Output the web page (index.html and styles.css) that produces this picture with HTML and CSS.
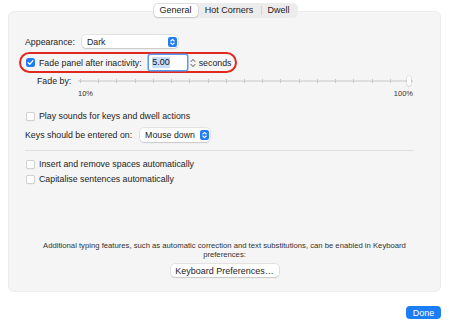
FILE: index.html
```html
<!DOCTYPE html>
<html>
<head>
<meta charset="utf-8">
<link rel="stylesheet" href="styles.css">
</head>
<body>
<div class="window">
  <div class="tabs">
    <div class="seg">
      <span class="tab t-general sel">General</span>
      <span class="tab t-hot">Hot Corners</span>
      <span class="tab t-dwell">Dwell</span>
    </div>
  </div>
  <div class="panel">
    <div class="row r-appearance">
      <span class="label">Appearance:</span>
      <span class="popup w-dark">
        <span class="ptext">Dark</span>
        <svg class="pbtn" width="9" height="10" viewBox="0 0 9 10"><rect x="0" y="0" width="9" height="10" rx="2.2" fill="#1f7cf2"/><path d="M2.8 4 L4.5 2.3 L6.2 4 M2.8 6 L4.5 7.7 L6.2 6" fill="none" stroke="#fff" stroke-width="1.1" stroke-linecap="round" stroke-linejoin="round"/></svg>
      </span>
    </div>
    <div class="highlight">
      <span class="cb on"><svg width="9" height="9" viewBox="0 0 9 9"><path d="M2.2 4.7 L3.8 6.3 L6.9 2.6" fill="none" stroke="#fff" stroke-width="1.3" stroke-linecap="round" stroke-linejoin="round"/></svg></span>
      <span class="label">Fade panel after inactivity:</span>
      <span class="field"><span class="sel-text">5.00</span></span>
      <svg class="stepper" width="6" height="12" viewBox="0 0 6 12"><path d="M1 4.6 L3 2.4 L5 4.6 M1 7.4 L3 9.6 L5 7.4" fill="none" stroke="#555" stroke-width="1" stroke-linecap="round" stroke-linejoin="round"/></svg>
      <span class="label">seconds</span>
    </div>
    <div class="slider-row">
      <span class="label fadeby">Fade by:</span>
      <div class="slider">
        <div class="track">
          <i></i><i></i><i></i><i></i><i></i><i></i><i></i><i></i><i></i><i></i><i></i><i></i><i></i><i></i><i></i><i></i><i></i><i></i><i></i>
          <span class="thumb"></span>
        </div>
      </div>
    </div>
    <div class="scale">
      <span>10%</span>
      <span>100%</span>
    </div>
    <div class="row check-row r-sounds">
      <span class="cb"></span>
      <span class="label">Play sounds for keys and dwell actions</span>
    </div>
    <div class="row r-keys">
      <span class="label">Keys should be entered on:</span>
      <span class="popup w-mouse">
        <span class="ptext">Mouse down</span>
        <svg class="pbtn" width="9" height="10" viewBox="0 0 9 10"><rect x="0" y="0" width="9" height="10" rx="2.2" fill="#1f7cf2"/><path d="M2.8 4 L4.5 2.3 L6.2 4 M2.8 6 L4.5 7.7 L6.2 6" fill="none" stroke="#fff" stroke-width="1.1" stroke-linecap="round" stroke-linejoin="round"/></svg>
      </span>
    </div>
    <div class="sep"></div>
    <div class="row check-row r-insert">
      <span class="cb"></span>
      <span class="label">Insert and remove spaces automatically</span>
    </div>
    <div class="row check-row r-cap">
      <span class="cb"></span>
      <span class="label">Capitalise sentences automatically</span>
    </div>
    <p class="note">Additional typing features, such as automatic correction and text substitutions, can be enabled in Keyboard preferences:</p>
    <div class="btn-row">
      <button class="btn">Keyboard Preferences…</button>
    </div>
  </div>
  <div class="footer">
    <button class="done">Done</button>
  </div>
</div>
</body>
</html>
```

FILE: styles.css
```css
* {
  box-sizing: border-box;
  margin: 0;
  padding: 0;
}

html,
body {
  width: 450px;
  height: 326px;
  background: #ffffff;
  overflow: hidden;
}

body {
  font-family: "Liberation Sans", Arial, sans-serif;
  font-size: 8.8px;
  color: #232323;
}

.window {
  display: flex;
  flex-direction: column;
  height: 326px;
  padding: 3px 9px 0 8px;
}

/* segmented control */
.tabs {
  display: flex;
  justify-content: center;
  margin-bottom: -7px;
  position: relative;
  z-index: 1;
}

.seg {
  display: flex;
  align-items: center;
  height: 15px;
  padding: 1px;
  background: #ececec;
  border-radius: 5px;
  margin-left: 1px;
}

.tab {
  height: 13px;
  line-height: 13px;
  text-align: center;
  color: #222;
  font-size: 9px;
}

.t-general { width: 44px; }
.t-hot { width: 63px; }
.t-dwell {
  width: 36px;
  position: relative;
}

.t-dwell::before {
  content: "";
  position: absolute;
  left: 0;
  top: 2px;
  height: 9px;
  border-left: 1px solid #d2d2d2;
}

.tab.sel {
  background: #ffffff;
  border-radius: 4px;
  box-shadow: 0 0 0 0.5px rgba(0, 0, 0, 0.12), 0 1px 1.5px rgba(0, 0, 0, 0.12);
}

/* panel */
.panel {
  height: 281px;
  display: flex;
  flex-direction: column;
  background: #f5f5f5;
  border: 1px solid #ececec;
  border-radius: 6px;
  padding: 22px 16px 14px;
}

.row {
  display: flex;
  align-items: center;
}

.r-appearance {
  height: 15px;
  gap: 7px;
}

.popup {
  height: 13px;
  display: flex;
  align-items: center;
  justify-content: space-between;
  background: #ffffff;
  border-radius: 4px;
  padding: 0 1px 0 5px;
  box-shadow: 0 0 0 0.5px rgba(0, 0, 0, 0.14), 0 1px 1.5px rgba(0, 0, 0, 0.12);
}

.w-dark { width: 96px; }
.w-mouse { width: 70px; }

.pbtn {
  display: block;
}

/* highlighted row */
.highlight {
  align-self: flex-start;
  display: flex;
  align-items: center;
  height: 21px;
  margin: 3px 0 0 -6px;
  padding: 0 4px 0 5px;
  border: 2px solid #e0281f;
  border-radius: 11px;
}

.highlight .cb {
  margin-right: 4px;
}

.highlight .field {
  margin-left: 7px;
}

.highlight .stepper {
  margin: 0 3px;
  display: block;
}

.cb {
  width: 9px;
  height: 9px;
  border-radius: 2.5px;
  background: #ffffff;
  box-shadow: inset 0 0 0 0.75px #c4c4c4, 0 0.5px 1px rgba(0, 0, 0, 0.06);
  flex: none;
}

.cb svg {
  display: block;
}

.cb.on {
  background: #1f7cf2;
  box-shadow: none;
}

.field {
  width: 38px;
  height: 15px;
  display: flex;
  align-items: center;
  padding-left: 3px;
  background: #ffffff;
  border-radius: 1.5px;
  box-shadow: 0 0 0 1.5px #5a9af0;
  color: #111;
  font-size: 9px;
}

.sel-text {
  background: #c9defa;
  line-height: 11px;
  padding: 0 0.5px;
}

/* slider */
.slider-row {
  display: flex;
  align-items: center;
  height: 12px;
  margin-top: 2px;
}

.fadeby {
  width: 53px;
  padding-left: 12px;
}

.slider {
  width: 335px;
}

.track {
  position: relative;
  height: 10px;
  display: flex;
  align-items: center;
  justify-content: space-between;
  padding: 0 4px 0 2px;
  background: linear-gradient(#dedede, #dedede) 0 50% / 100% 2px no-repeat;
  border-radius: 1px;
}

.track i {
  display: block;
  width: 1px;
  height: 4px;
  background: #c8c8c8;
}

.thumb {
  position: absolute;
  right: 2px;
  top: 0;
  width: 4px;
  height: 10px;
  background: #ffffff;
  border-radius: 2px;
  box-shadow: 0 0 0 0.5px rgba(0, 0, 0, 0.1), 0 0.5px 1.5px rgba(0, 0, 0, 0.15);
}

.scale {
  display: flex;
  justify-content: space-between;
  width: 335px;
  margin-left: 53px;
  height: 10px;
  line-height: 10px;
  margin-top: 2px;
  font-size: 7.5px;
  color: #333;
}

/* checkbox rows */
.check-row {
  height: 12px;
  gap: 4px;
  padding-left: 1px;
}

.r-sounds { margin-top: 11px; }

.r-keys {
  height: 14px;
  margin-top: 6px;
  gap: 8px;
}

.r-keys .popup {
  height: 14px;
}

.sep {
  height: 1px;
  margin: 8px 10px 0 0;
  background: #e0e0e0;
}

.r-insert { margin-top: 7px; }
.r-cap { margin-top: 3px; }

.note {
  margin-top: auto;
  text-align: center;
  font-size: 7.7px;
  line-height: 9px;
  color: #333;
  padding: 0 4px;
}

.btn-row {
  display: flex;
  justify-content: center;
  margin-top: 5px;
}

.btn {
  width: 108px;
  height: 13px;
  font-family: inherit;
  font-size: 9px;
  color: #232323;
  background: #ffffff;
  border: none;
  border-radius: 4px;
  box-shadow: 0 0 0 0.5px rgba(0, 0, 0, 0.14), 0 1px 1.5px rgba(0, 0, 0, 0.12);
}

.footer {
  display: flex;
  justify-content: flex-end;
  margin-top: 14px;
}

.done {
  width: 35px;
  height: 13px;
  font-family: inherit;
  font-size: 9px;
  color: #ffffff;
  background: #1b7ef6;
  border: none;
  border-radius: 4px;
}
```
